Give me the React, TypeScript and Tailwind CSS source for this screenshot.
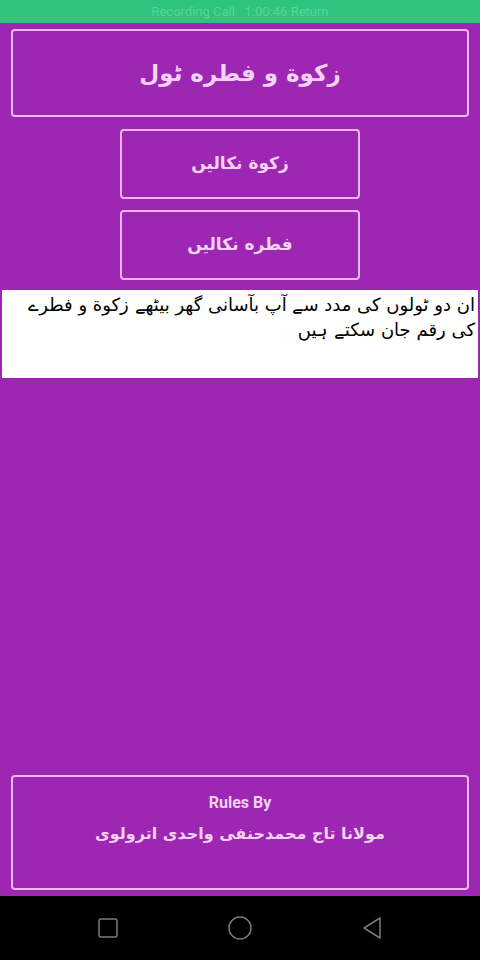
import React from 'react';

const urdu = { fontFamily: '"DejaVu Sans", "Noto Sans", sans-serif' };

const OutlineBox = ({ className, children }: { className: string; children: React.ReactNode }) => (
  <div className={`border-2 border-[#f2b6f2] rounded-[4px] flex flex-col items-center justify-center ${className}`}>
    {children}
  </div>
);

export default function App() {
  return (
    <div className="w-[480px] h-[960px] flex flex-col bg-[#9d26b2] overflow-hidden">
      {/* status bar */}
      <div className="h-[23px] bg-[#2fc47d] flex items-center justify-center text-[13px] text-[#56d597]" style={{ fontFamily: 'Roboto, sans-serif' }}>
        Recording Call&nbsp;&nbsp; 1:00:46 Return
      </div>

      <div className="flex-1 flex flex-col pt-[6px]">
        <OutlineBox className="mx-[11px] h-[88px]">
          <span dir="rtl" className="text-[23px] font-bold text-[#f6d2f6]" style={urdu}>زکوة و فطره ٹول</span>
        </OutlineBox>

        <div className="flex flex-col items-center gap-[11px] mt-[12px]">
          <OutlineBox className="w-[240px] h-[70px]">
            <span dir="rtl" className="text-[17px] font-bold text-[#f6d2f6]" style={urdu}>زکوة نکالیں</span>
          </OutlineBox>
          <OutlineBox className="w-[240px] h-[70px]">
            <span dir="rtl" className="text-[17px] font-bold text-[#f6d2f6]" style={urdu}>فطره نکالیں</span>
          </OutlineBox>
        </div>

        <div className="mx-[2px] mt-[10px] h-[88px] bg-white px-[3px] pt-[2px]">
          <p dir="rtl" className="text-[18px] leading-[25px] text-black" style={urdu}>
            ان دو ٹولوں کی مدد سے آپ بآسانی گھر بیٹھے زکوة و فطرے کی رقم جان سکتے ہیں
          </p>
        </div>

        <div className="flex-1" />

        <OutlineBox className="mx-[11px] h-[115px] mb-[6px] justify-start pt-[14px]">
          <span className="text-[16px] font-bold text-[#f6d2f6]" style={{ fontFamily: 'Roboto, sans-serif' }}>Rules By</span>
          <span dir="rtl" className="text-[16px] font-bold text-[#f6d2f6] mt-[7px]" style={urdu}>مولانا تاج محمدحنفی واحدی اترولوی</span>
        </OutlineBox>
      </div>

      {/* nav bar */}
      <div className="h-[64px] bg-black flex items-center justify-center gap-[107px]">
        <svg width="24" height="24" viewBox="0 0 24 24" fill="none" stroke="#7a7a7a" strokeWidth="1.5">
          <rect x="3" y="3" width="18" height="18" rx="2" />
        </svg>
        <svg width="26" height="26" viewBox="0 0 26 26" fill="none" stroke="#7a7a7a" strokeWidth="1.5">
          <circle cx="13" cy="13" r="11" />
        </svg>
        <svg width="24" height="24" viewBox="0 0 24 24" fill="none" stroke="#7a7a7a" strokeWidth="1.5">
          <path d="M20 2 L20 22 L4 12 Z" strokeLinejoin="round" />
        </svg>
      </div>
    </div>
  );
}
